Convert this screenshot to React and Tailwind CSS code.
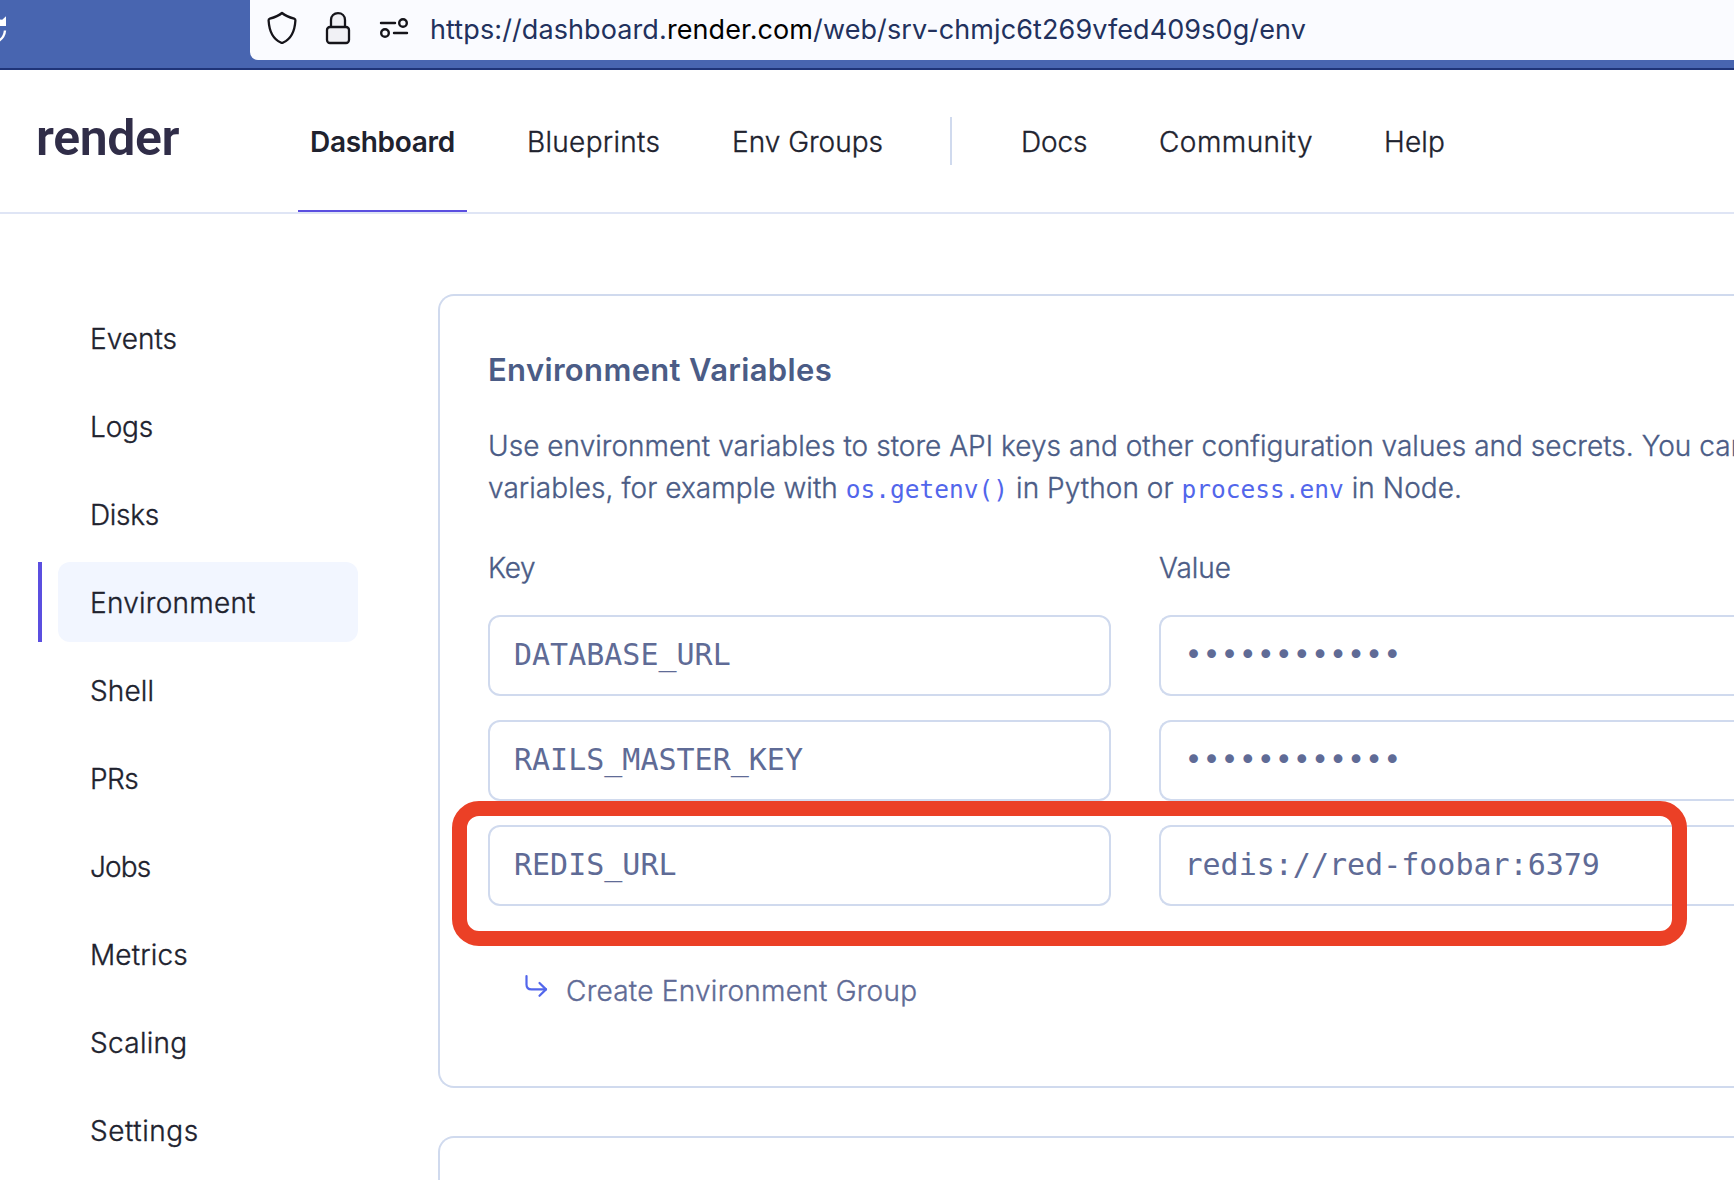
import React from "react";

const primaryNav = [
  { label: "Blueprints", style: "w-[132px] tracking-[0.3px]" },
  { label: "Env Groups", style: "w-[150px]" },
];

const secondaryNav = [
  { label: "Docs", style: "w-[65px] tracking-[-0.1px]" },
  { label: "Community", style: "w-[152px] tracking-[0.45px]" },
  { label: "Help", style: "w-[60px] tracking-[0.2px]" },
];

const sections = [
  { name: "Events", style: "tracking-normal" },
  { name: "Logs", style: "tracking-[-0.15px]" },
  { name: "Disks", style: "tracking-[-0.3px]" },
  { name: "Environment", style: "tracking-[0.25px]" },
  { name: "Shell", style: "tracking-[0.15px]" },
  { name: "PRs", style: "tracking-[-0.5px]" },
  { name: "Jobs", style: "tracking-[-0.9px]" },
  { name: "Metrics", style: "tracking-[0.15px]" },
  { name: "Scaling", style: "tracking-[0.3px]" },
  { name: "Settings", style: "tracking-[0.55px]" },
];

const variables = [
  { name: "DATABASE_URL", value: "••••••••••••" },
  { name: "RAILS_MASTER_KEY", value: "••••••••••••" },
  { name: "REDIS_URL", value: "redis://red-foobar:6379", highlighted: true },
];

function ReloadIcon() {
  return (
    <svg width="8" height="28" viewBox="0 0 8 28" fill="none" className="mt-[15px] shrink-0">
      <path d="M0 4.5L2.2 4.7L6 1.2V11H0Z" fill="#fff" />
      <path d="M5 15.5C4.6 20 2.6 23.4 -1 25.6" stroke="#fff" strokeWidth="2.4" />
    </svg>
  );
}

function ShieldIcon() {
  return (
    <svg width="32" height="36" viewBox="0 0 32 36" fill="none" stroke="#15141a" strokeWidth="2.3" strokeLinejoin="round">
      <path d="M16 3C18.6 5.2 23.6 7.4 28.2 8.6C29.1 8.9 29.5 9.5 29.4 10.5C28.8 20.4 25.2 29 17.2 32.5C16.4 33 15.6 33 14.8 32.5C6.8 29 3.2 20.4 2.6 10.5C2.5 9.5 2.9 8.9 3.8 8.6C8.4 7.4 13.4 5.2 16 3Z" />
    </svg>
  );
}

function LockIcon() {
  return (
    <svg width="28" height="36" viewBox="0 0 28 36" stroke="#15141a" strokeWidth="2.3">
      <path d="M7 17V10C7 5.8 10 3.1 14 3.1S21 5.8 21 10V17" fill="#f1f1f5" />
      <rect x="3" y="17" width="22" height="16" rx="3" fill="#f1f1f5" />
    </svg>
  );
}

function PermissionsIcon() {
  return (
    <svg width="32" height="24" viewBox="0 0 32 24" fill="none" stroke="#15141a" strokeWidth="2.4" strokeLinecap="round">
      <path d="M3 7H17M16 17H29" />
      <circle cx="25" cy="7" r="3.8" />
      <circle cx="7" cy="17" r="3.8" />
    </svg>
  );
}

function BranchArrowIcon() {
  return (
    <svg width="24" height="24" viewBox="0 0 24 24" fill="none" stroke="#5266eb" strokeWidth="2.2" strokeLinecap="round" strokeLinejoin="round">
      <path d="M2.5 2V10.5C2.5 13.4 4.2 15.4 7.5 15.4H22" />
      <path d="M15.5 9L22 15.4L15.5 21.8" />
    </svg>
  );
}

function BrowserBar() {
  return (
    <div className="flex h-[70px] items-start border-b-2 border-[#1f3478] bg-[#4865b0]">
      <ReloadIcon />
      <div className="ml-[242px] flex h-[60px] flex-1 items-start rounded-bl-lg bg-[#fafbff] pt-[10px] pl-4">
        <ShieldIcon />
        <div className="ml-[26px]"><LockIcon /></div>
        <div className="mt-[6px] ml-[26px]"><PermissionsIcon /></div>
        <p className="ml-5 pt-px text-[27px] leading-[38px] tracking-[0.1px] whitespace-nowrap text-[#22315d]">
          https://dashboard.<span className="text-black">render.com</span>/web/srv-chmjc6t269vfed409s0g/env
        </p>
      </div>
    </div>
  );
}

function Header() {
  return (
    <header className="flex h-36 items-stretch border-b-2 border-[#dfe5f5] text-[28px] font-light whitespace-nowrap text-[#20222e]">
      <div className="w-[298px] shrink-0 pt-[35px] pl-9 font-['Roboto'] text-[50px] leading-[66px] font-semibold tracking-[-0.4px] text-[#302d48]">
        render
      </div>
      <div className="flex w-[169px] items-center border-b-2 border-[#5b4fe0] pt-[3px] pl-3 font-semibold tracking-[-0.3px]">
        Dashboard
      </div>
      <nav className="ml-[60px] flex items-center gap-[73px] pt-px [-webkit-text-stroke:0.35px]">
        {primaryNav.map((item) => (
          <a key={item.label} className={item.style}>{item.label}</a>
        ))}
      </nav>
      <div className="mt-[47px] ml-[68px] h-12 w-0.5 bg-[#d0daee]" />
      <nav className="ml-[69px] flex items-center gap-[73px] pt-px [-webkit-text-stroke:0.35px]">
        {secondaryNav.map((item) => (
          <a key={item.label} className={item.style}>{item.label}</a>
        ))}
      </nav>
    </header>
  );
}

function Sidebar() {
  return (
    <aside className="flex w-[438px] shrink-0 flex-col gap-2 pt-[84px] pl-[38px] text-[28px] font-light text-[#20222e] [-webkit-text-stroke:0.35px]">
      {sections.map(({ name, style }) => {
        const active = name === "Environment";
        return (
          <div key={name} className="flex h-20 w-80 gap-4">
            <div className={active ? "w-1 bg-[#5b4fe0]" : "w-1"} />
            <div className={active ? "flex flex-1 items-center rounded-xl bg-[#f2f6ff] pt-0.5 pl-8" : "flex flex-1 items-center pt-0.5 pl-8"}>
              <a className={style}>{name}</a>
            </div>
          </div>
        );
      })}
    </aside>
  );
}

function VariableRow({ variable }) {
  return (
    <div className="relative flex h-[81px] gap-12 font-['DejaVu_Sans_Mono',monospace] text-[30px] text-[#5f6b96]">
      <div className="flex w-[623px] items-center rounded-xl border-2 border-[#d0daee] pb-[2px] pl-6">{variable.name}</div>
      <div className="flex flex-1 items-center rounded-l-xl border-2 border-r-0 border-[#d0daee] pb-[2px] pl-[23.5px]">{variable.value}</div>
      {variable.highlighted && (
        <div className="absolute -top-6 -left-9 h-[145px] w-[1235px] rounded-[27px] border-[15px] border-[#eb4026]" />
      )}
    </div>
  );
}

function InlineCode({ children }) {
  return (
    <code className="font-['DejaVu_Sans_Mono',monospace] text-[24.5px] leading-none font-normal tracking-normal text-[#5266eb] [-webkit-text-stroke:0]">
      {children}
    </code>
  );
}

function EnvironmentCard() {
  return (
    <section className="h-[794px] rounded-l-2xl border-2 border-r-0 border-[#d0daee] pt-[54px] pl-12 text-[28px] font-light text-[#4b5c86]">
      <h2 className="text-[31px] leading-10 font-semibold tracking-[0.34px]">Environment Variables</h2>
      <div className="mt-[35px] leading-[42px] whitespace-nowrap [-webkit-text-stroke:0.35px]">
        <p className="tracking-[0.037px]">
          Use environment variables to store API keys and other configuration values and secrets. You can
        </p>
        <p className="tracking-[0.06px]">
          variables, for example with <InlineCode>os.getenv()</InlineCode> in Python or{" "}
          <InlineCode>process.env</InlineCode> in Node.
        </p>
      </div>
      <div className="mt-[39px] flex gap-12 leading-10 [-webkit-text-stroke:0.35px]">
        <div className="w-[623px] tracking-[-0.3px]">Key</div>
        <div>Value</div>
      </div>
      <div className="mt-[27px] flex flex-col gap-6 font-normal">
        {variables.map((variable) => (
          <VariableRow key={variable.name} variable={variable} />
        ))}
      </div>
      <div className="mt-[65px] flex items-start pl-9 text-[#5f6b96]">
        <div className="mt-[3px]"><BranchArrowIcon /></div>
        <a className="ml-[18px] leading-10 tracking-[0.25px] [-webkit-text-stroke:0.35px]">Create Environment Group</a>
      </div>
    </section>
  );
}

export default function App() {
  return (
    <div className="h-[1180px] w-[1734px] overflow-hidden bg-white font-['Inter',sans-serif]">
      <BrowserBar />
      <Header />
      <div className="flex">
        <Sidebar />
        <main className="flex min-w-0 flex-1 flex-col gap-12 overflow-hidden pt-20">
          <EnvironmentCard />
          <section className="h-40 shrink-0 rounded-tl-2xl border-t-2 border-l-2 border-[#d0daee]" />
        </main>
      </div>
    </div>
  );
}
